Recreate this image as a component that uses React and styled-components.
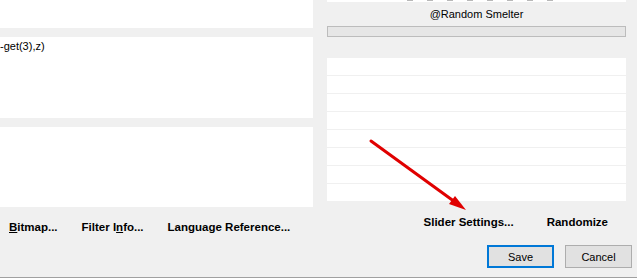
import React from 'react';
import styled, { createGlobalStyle } from 'styled-components';

const GlobalStyle = createGlobalStyle`
  html, body {
    margin: 0;
    padding: 0;
    background: #f0f0f0;
  }
  body {
    font-family: "Liberation Sans", Arial, sans-serif;
    font-size: 11px;
    color: #000;
  }
`;

const Window = styled.div`
  position: relative;
  width: 637px;
  height: 278px;
  background: #f0f0f0;
  overflow: hidden;
  box-sizing: border-box;
  border-bottom: 1px solid #a0a0a0;
`;

const Main = styled.div`
  display: flex;
  height: 245px;
`;

const LeftColumn = styled.div`
  width: 313px;
  display: flex;
  flex-direction: column;
  gap: 9px;
`;

const RightColumn = styled.div`
  width: 299px;
  margin-left: 14px;
  display: flex;
  flex-direction: column;
`;

const WhiteBox = styled.div`
  background: #fff;
  height: ${(p) => p.$h}px;
  box-sizing: border-box;
  overflow: hidden;
`;

const Code = styled.div`
  font-size: 11px;
  line-height: 13px;
  padding-top: 3px;
  white-space: nowrap;
`;

const LinkRow = styled.div`
  display: flex;
  justify-content: ${(p) => (p.$end ? 'flex-end' : 'flex-start')};
  gap: ${(p) => p.$gap}px;
  padding: 0 ${(p) => p.$pr || 0}px 0 ${(p) => p.$pl || 0}px;
  margin-top: ${(p) => p.$mt}px;
`;

const LinkButton = styled.button`
  border: none;
  background: none;
  padding: 0;
  font-family: "Liberation Sans", Arial, sans-serif;
  font-weight: bold;
  font-size: 11.5px;
  line-height: 14px;
  color: #000;
  white-space: nowrap;
  u {
    text-decoration: underline;
  }
`;

const PreviewStrip = styled.div`
  height: 2px;
  background: #fff;
  display: flex;
  gap: 14px;
  padding-left: 80px;
  span {
    width: 6px;
    height: 1px;
    background: #b8b8b8;
  }
`;

const Title = styled.div`
  text-align: center;
  font-size: 11px;
  line-height: 13px;
  margin-top: 6px;
`;

const Bar = styled.div`
  height: 11px;
  margin-top: 5px;
  border: 1px solid #bcbcbc;
  background: #e6e6e6;
  box-sizing: border-box;
`;

const List = styled.div`
  margin-top: 21px;
  display: flex;
  flex-direction: column;
  gap: 1px;
`;

const ListRow = styled.div`
  height: 17px;
  background: #fff;
`;

const Footer = styled.div`
  display: flex;
  justify-content: flex-end;
  gap: 11px;
  padding-right: 5px;
`;

const DialogButton = styled.button`
  width: 67px;
  height: 23px;
  box-sizing: border-box;
  background: #e1e1e1;
  border: ${(p) => (p.$default ? '2px solid #0078d7' : '1px solid #adadad')};
  font-family: "Liberation Sans", Arial, sans-serif;
  font-size: 11px;
  color: #000;
  padding: 0;
`;

const Annotation = styled.svg`
  position: absolute;
  left: 0;
  top: 0;
  pointer-events: none;
`;

export default function App() {
  return (
    <Window>
      <GlobalStyle />
      <Main>
        <LeftColumn>
          <WhiteBox $h={28} />
          <WhiteBox $h={81}>
            <Code>-get(3),z)</Code>
          </WhiteBox>
          <WhiteBox $h={80} />
          <LinkRow $gap={24} $pl={9} $mt={4}>
            <LinkButton><u>B</u>itmap...</LinkButton>
            <LinkButton>Filter I<u>n</u>fo...</LinkButton>
            <LinkButton>Language Reference...</LinkButton>
          </LinkRow>
        </LeftColumn>
        <RightColumn>
          <PreviewStrip>
            {Array.from({ length: 8 }).map((_, i) => (
              <span key={i} />
            ))}
          </PreviewStrip>
          <Title>@Random Smelter</Title>
          <Bar />
          <List>
            {Array.from({ length: 8 }).map((_, i) => (
              <ListRow key={i} />
            ))}
          </List>
          <LinkRow $end $gap={33} $pr={18} $mt={14}>
            <LinkButton>Slider Settings...</LinkButton>
            <LinkButton>Randomize</LinkButton>
          </LinkRow>
        </RightColumn>
      </Main>
      <Footer>
        <DialogButton $default>Save</DialogButton>
        <DialogButton>Cancel</DialogButton>
      </Footer>
      <Annotation width="637" height="278" viewBox="0 0 637 278">
        <line x1="371" y1="141" x2="455" y2="202" stroke="#e00000" strokeWidth="3" strokeLinecap="round" />
        <polygon points="466,210 449,204 455,196" fill="#e00000" />
      </Annotation>
    </Window>
  );
}
